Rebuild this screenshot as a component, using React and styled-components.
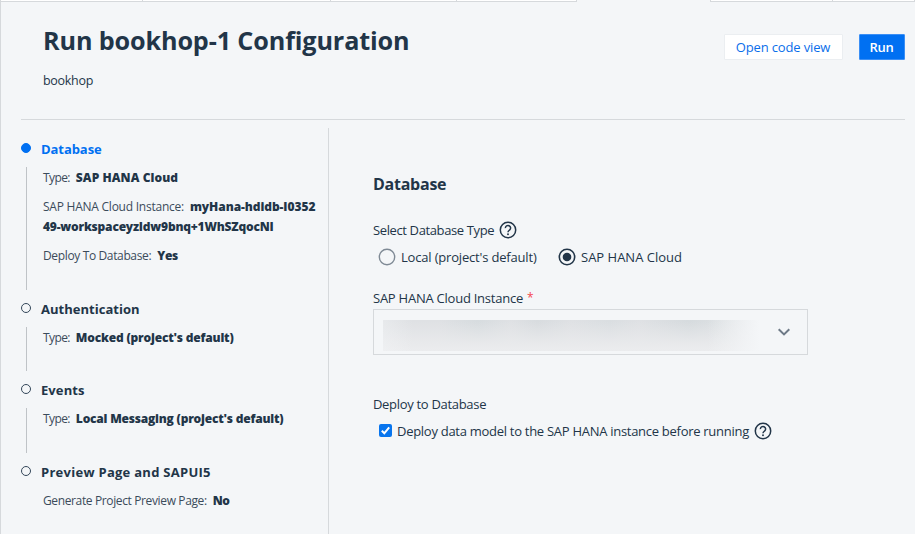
import React from 'react';
import styled, { createGlobalStyle } from 'styled-components';

const ink = '#223548';
const line = '#d6d9dc';

const Global = createGlobalStyle`
  * { box-sizing: border-box; }
  body { margin: 0; background: #f4f6f8; overflow: hidden; }
`;

const Page = styled.div`
  display: flex;
  flex-direction: column;
  width: 915px;
  height: 534px;
  overflow: hidden;
  background: #f4f6f8;
  color: ${ink};
  font: 400 13px/20px "Open Sans", "Noto Sans", sans-serif;
  border-left: 1px solid ${line};
`;

const Text = styled.span`
  letter-spacing: ${p => p.$ls || 0}px;
  white-space: nowrap;
`;

const TabStrip = styled.div`
  display: flex;
  height: 2px;
  flex: none;
`;
const TabEdge = styled.div`
  width: ${p => p.$w}px;
  height: 2px;
  background: ${p => (p.$active ? 'transparent' : '#fff')};
  border-right: 1px solid ${line};
  border-bottom: ${p => (p.$active ? 'none' : `1px solid ${line}`)};
`;

const Header = styled.header`
  display: flex;
  justify-content: space-between;
  height: 118px;
  flex: none;
  margin: 0 10px 0 20px;
  padding-left: 22px;
  border-bottom: 1px solid ${line};
`;
const Title = styled.h1`
  margin: 20px 0 0;
  font-size: 25.2px;
  line-height: 36px;
  font-weight: 700;
  letter-spacing: -0.13px;
  white-space: nowrap;
`;
const Subtitle = styled.div`
  margin-top: 13px;
  font-size: 12.5px;
`;
const Actions = styled.div`
  display: flex;
  gap: 16px;
  padding-top: 32px;
`;
const Button = styled.button`
  width: ${p => p.$w}px;
  height: 26px;
  padding: 1px 1px 0 0;
  border: 1px solid ${p => (p.$primary ? '#3b8ff5' : '#ebeef1')};
  border-radius: 1px;
  background: ${p => (p.$primary ? '#0070f2' : '#fff')};
  color: ${p => (p.$primary ? '#fff' : '#0a6eea')};
  font: ${p => (p.$primary ? 600 : 400)} 13px/23px "Open Sans", sans-serif;
`;

const Body = styled.div`
  display: flex;
  flex: 1;
  min-height: 0;
  padding-top: 8px;
`;
const Steps = styled.nav`
  display: flex;
  flex-direction: column;
  gap: 9px;
  width: 328px;
  padding: 11px 0 0 20px;
  border-right: 1px solid ${line};
`;
const StepHead = styled.div`
  display: flex;
  height: 20px;
  margin-bottom: 8px;
  gap: 10px;
  font-weight: 700;
  color: ${p => (p.$active ? '#0070f2' : ink)};
`;
const Bullet = styled.span`
  width: 10px;
  height: 10px;
  margin-top: 4px;
  border-radius: 50%;
  border: 1px solid ${p => (p.$active ? '#0070f2' : '#34475a')};
  background: ${p => (p.$active ? '#0070f2' : 'transparent')};
`;
const StepBody = styled.div`
  display: flex;
  flex-direction: column;
  gap: 9px;
  margin-left: 5px;
  padding: 1px 0 23.6px 16px;
  border-left: 1px solid ${p => (p.$last ? 'transparent' : '#bfc3c7')};
  font-size: 12px;
`;
const Label = styled(Text)`
  margin-right: 6px;
  color: #3b4b5b;
`;
const Value = styled(Text)`
  font-weight: 800;
`;

const Panel = styled.main`
  flex: 1;
  padding: 46px 0 0 44px;
`;
const PanelTitle = styled.h2`
  margin: 0;
  font-size: 16px;
  line-height: 20px;
  font-weight: 700;
  letter-spacing: -0.25px;
`;
const Field = styled.section`
  margin-top: ${p => p.$top}px;
`;
const FieldLabel = styled.div`
  display: flex;
  align-items: center;
  gap: 5px;
  height: 20px;
`;
const Required = styled.span`
  color: #f5484f;
  font-size: 12px;
  margin-left: -1px;
`;
const Options = styled.div`
  display: flex;
  align-items: center;
  margin-top: 7px;
  padding-left: ${p => p.$indent}px;
  height: 20px;
`;
const Option = styled.label`
  display: flex;
  align-items: center;
  gap: 5px;
  width: ${p => (p.$w ? `${p.$w}px` : 'auto')};
`;
const Icon = styled.svg`
  display: block;
  flex: none;
  margin-top: -1px;
`;
const Select = styled.div`
  display: flex;
  align-items: center;
  justify-content: space-between;
  width: 435px;
  height: 46px;
  margin-top: 1px;
  padding: 7px 16px 0 9px;
  border: 1px solid ${line};
`;
const Redacted = styled.div`
  width: 377px;
  height: 31px;
  background:
    linear-gradient(90deg, rgba(244,246,248,.4), transparent 8%, transparent 86%, #f4f6f8),
    linear-gradient(180deg, transparent 5%, #e9eaec 80%, #ebecee),
    linear-gradient(90deg, #dfe1e4 0 15%, #d7dcdf 25%, #dfe1e4 34%, #d8dcdf 41%, #dfe1e4 50%, #dadee1 60%, #dfe1e4 68%, #d6dbde 81%, #e4e6e8);
`;
const Chevron = styled.svg`
  display: block;
  margin-top: -7px;
`;

const Help = () => (
  <Icon width="18" height="18" viewBox="0 0 18 18" fill="none" stroke={ink}>
    <circle cx="9" cy="9" r="7.7" strokeWidth="1.5" />
    <path d="M6.4 7.1a2.6 2.5 0 1 1 4.3 1.8C9.7 9.7 9 10 9 11.3" strokeWidth="1.5" />
    <circle cx="9" cy="13.2" r="0.95" fill={ink} stroke="none" />
  </Icon>
);

const Radio = ({ checked }) => (
  <Icon width="18" height="18" viewBox="0 0 18 18" fill="none">
    <circle cx="9" cy="9" r="7.7" stroke={checked ? ink : '#7f8a95'} strokeWidth={checked ? 1.6 : 1.4} />
    {checked && <circle cx="9" cy="9" r="4.3" fill={ink} />}
  </Icon>
);

const Check = () => (
  <Icon width="13" height="13" viewBox="0 0 13 13">
    <rect width="13" height="13" rx="2" fill="#0875ee" />
    <path d="M2.8 6.8l2.5 2.5 4.9-6" fill="none" stroke="#fff" strokeWidth="2" />
  </Icon>
);

const tabs = [142, 188, 126, 121];

const steps = [
  {
    title: 'Database', ls: -0.07, active: true,
    rows: [
      { label: 'Type:', ls: -0.6, values: [['SAP HANA Cloud', 0.08]] },
      {
        label: 'SAP HANA Cloud Instance:', ls: -0.24,
        values: [['myHana-hdidb-I0352', -0.06], ['49-workspaceyzIdw9bnq+1WhSZqocNI', -0.2]],
      },
      { label: 'Deploy To Database:', ls: -0.36, values: [['Yes', -0.3]] },
    ],
  },
  { title: 'Authentication', ls: 0.02, rows: [{ label: 'Type:', ls: -0.6, values: [["Mocked (project's default)", -0.19]] }] },
  { title: 'Events', ls: 0.09, rows: [{ label: 'Type:', ls: -0.6, values: [["Local Messaging (project's default)", -0.21]] }] },
  { title: 'Preview Page and SAPUI5', ls: 0.27, rows: [{ label: 'Generate Project Preview Page:', ls: -0.37, values: [['No', -0.6]] }] },
];

function Step({ step, last }) {
  return (
    <div>
      <StepHead $active={step.active}>
        <Bullet $active={step.active} />
        <Text $ls={step.ls}>{step.title}</Text>
      </StepHead>
      <StepBody $last={last}>
        {step.rows.map(row => (
          <div key={row.label}>
            <Label $ls={row.ls}>{row.label}</Label>
            {row.values.map(([text, ls], i) => (
              <React.Fragment key={text}>
                {i > 0 && <br />}
                <Value $ls={ls}>{text}</Value>
              </React.Fragment>
            ))}
          </div>
        ))}
      </StepBody>
    </div>
  );
}

export default function App() {
  return (
    <Page>
      <Global />
      <TabStrip>
        {tabs.map(w => <TabEdge key={w} $w={w} />)}
        <TabEdge $w={134} $active />
        <TabEdge $w={122} />
        <TabEdge $w={82} />
      </TabStrip>
      <Header>
        <div>
          <Title>Run bookhop-1 Configuration</Title>
          <Subtitle><Text $ls={-0.3}>bookhop</Text></Subtitle>
        </div>
        <Actions>
          <Button $w={119}><Text $ls={-0.15}>Open code view</Text></Button>
          <Button $w={46} $primary><Text $ls={-0.2}>Run</Text></Button>
        </Actions>
      </Header>
      <Body>
        <Steps>
          {steps.map((step, i) => <Step key={step.title} step={step} last={i === steps.length - 1} />)}
        </Steps>
        <Panel>
          <PanelTitle>Database</PanelTitle>
          <Field $top={26}>
            <FieldLabel><Text $ls={-0.38}>Select Database Type</Text><Help /></FieldLabel>
            <Options $indent={5}>
              <Option $w={180}><Radio /><Text $ls={-0.18}>Local (project's default)</Text></Option>
              <Option><Radio checked /><Text $ls={0}>SAP HANA Cloud</Text></Option>
            </Options>
          </Field>
          <Field $top={21}>
            <FieldLabel><Text $ls={-0.24}>SAP HANA Cloud Instance</Text><Required>*</Required></FieldLabel>
            <Select>
              <Redacted />
              <Chevron width="14" height="10" viewBox="0 0 14 10" fill="none" stroke="#6e7a87" strokeWidth="2">
                <path d="M1.7 2.2L7 7.4l5.3-5.2" />
              </Chevron>
            </Select>
          </Field>
          <Field $top={39}>
            <FieldLabel><Text $ls={-0.31}>Deploy to Database</Text></FieldLabel>
            <Options $indent={6}>
              <Option><Check /><Text $ls={-0.28}>Deploy data model to the SAP HANA instance before running</Text><Help /></Option>
            </Options>
          </Field>
        </Panel>
      </Body>
    </Page>
  );
}
